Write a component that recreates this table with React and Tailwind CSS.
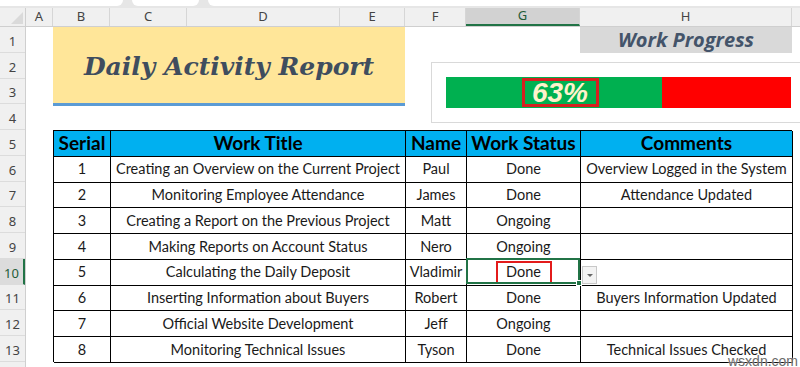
import React from "react";

const cols = [
  { l: "A", w: 27 },
  { l: "B", w: 57 },
  { l: "C", w: 77 },
  { l: "D", w: 153 },
  { l: "E", w: 65 },
  { l: "F", w: 61 },
  { l: "G", w: 114, sel: true },
  { l: "H", w: 212 },
];

const rows = [
  ["1", "Creating an Overview on the Current Project", "Paul", "Done", "Overview Logged in the System"],
  ["2", "Monitoring Employee Attendance", "James", "Done", "Attendance Updated"],
  ["3", "Creating a Report on the Previous Project", "Matt", "Ongoing", ""],
  ["4", "Making Reports on Account Status", "Nero", "Ongoing", ""],
  ["5", "Calculating the Daily Deposit", "Vladimir", "Done", ""],
  ["6", "Inserting Information about Buyers", "Robert", "Done", "Buyers Information Updated"],
  ["7", "Official Website Development", "Jeff", "Ongoing", ""],
  ["8", "Monitoring Technical Issues", "Tyson", "Done", "Technical Issues Checked"],
];

const uiFont = { fontFamily: '"Noto Sans", "Open Sans", sans-serif' };
const cellFont = { fontFamily: 'Lato, "Open Sans", sans-serif' };

export default function App() {
  return (
    <div className="w-[800px] h-[367px] overflow-hidden bg-white relative flex flex-col" style={uiFont}>
      {/* top strip */}
      <div className="h-[8px] bg-[#e6e6e6] flex items-start gap-[9px] shrink-0">
        <div className="w-[123px] h-[6px] bg-white rounded-br-[6px]" />
        <div className="w-[67px] h-[6px] bg-white rounded-b-[6px]" />
        <div className="flex-1 h-[6px] bg-white rounded-bl-[6px]" />
      </div>
      {/* column header */}
      <div className="h-[19px] flex shrink-0 bg-[#f0f0f0] border-b border-[#cfcfcf]">
        <div className="w-[26px] relative border-r border-[#cfcfcf]">
          <div className="absolute right-[2px] bottom-[2px] w-0 h-0 border-l-[12px] border-l-transparent border-b-[12px] border-b-[#dadada]" />
        </div>
        {cols.map((c) => (
          <div
            key={c.l}
            style={{ width: c.w }}
            className={
              "flex items-center justify-center text-[13px] border-r border-[#d6d6d6] " +
              (c.sel ? "bg-[#d2d2d2] border-b-2 border-b-[#217346] text-[#1f5c38]" : "text-[#444]")
            }
          >
            {c.l}
          </div>
        ))}
        <div className="flex-1" />
      </div>
      {/* body */}
      <div className="flex flex-1 min-h-0">
        <div className="w-[26px] shrink-0 bg-[#f0f0f0] border-r border-[#cfcfcf] flex flex-col">
          {Array.from({ length: 14 }, (_, i) => (
            <div
              key={i}
              className={
                "h-[25.75px] shrink-0 flex items-end pb-[2px] justify-center text-[13px] leading-[18px] border-b border-[#dcdcdc] " +
                (i === 9 ? "bg-[#dcdcdc] text-[#1f5c38] border-r-2 border-r-[#217346]" : "text-[#444]")
              }
            >
              {i < 13 ? i + 1 : ""}
            </div>
          ))}
        </div>
        <div className="relative flex-1">
          <div className="grid grid-cols-[27px_57px_77px_153px_65px_61px_114px_212px_1fr] grid-rows-[repeat(14,25.75px)]">
            {/* Title */}
            <div className="col-start-2 col-span-4 row-start-1 row-span-4 self-start h-[79px] bg-[#ffe699] border-b-[3px] border-[#5b9bd5] flex items-center justify-center pt-[3px]">
              <span
                className="text-[25px] font-bold italic text-[#3f4d5e]"
                style={{ fontFamily: '"DejaVu Serif", serif' }}
              >
                Daily Activity Report
              </span>
            </div>
            {/* Work Progress */}
            <div className="col-start-8 row-start-1 bg-[#d9d9d9] flex items-center justify-center">
              <span
                className="text-[20px] font-bold italic text-[#44546a]"
                style={{ fontFamily: '"Open Sans", sans-serif' }}
              >
                Work Progress
              </span>
            </div>
            {/* Table */}
            <div
              className="col-start-2 col-span-7 row-start-5 row-span-9 grid grid-cols-[57px_295px_61px_114px_212px] grid-rows-[repeat(9,25.75px)] border-l border-t border-black text-[#1a1a1a]"
              style={cellFont}
            >
              {["Serial", "Work Title", "Name", "Work Status", "Comments"].map((h) => (
                <div
                  key={h}
                  className="bg-[#00b0f0] border-r border-b border-black flex items-center justify-center text-[19px] font-bold text-black whitespace-nowrap overflow-hidden"
                >
                  {h}
                </div>
              ))}
              {rows.map((r, ri) =>
                r.map((v, ci) => (
                  <div
                    key={ri + "-" + ci}
                    className="border-r border-b border-black flex items-center justify-center text-[14.5px] whitespace-nowrap overflow-hidden"
                  >
                    {ri === 4 && ci === 3 ? (
                      <span className="border-2 border-[#e31b1b] w-[56px] h-[23px] flex items-center justify-center">
                        {v}
                      </span>
                    ) : (
                      v
                    )}
                  </div>
                ))
              )}
            </div>
          </div>

          {/* Selected cell G10 */}
          <div className="absolute left-[440px] top-[231px] w-[114px] h-[26px] border-2 border-[#217346]">
            <div className="absolute right-[-4px] bottom-[-4px] w-[6px] h-[6px] bg-[#217346] border border-white" />
          </div>
          {/* dropdown button */}
          <div className="absolute left-[556px] top-[239px] w-[15px] h-[18px] bg-[#f3f3f3] border border-[#c8c8c8] flex items-center justify-center">
            <div className="w-0 h-0 border-l-[3px] border-r-[3px] border-t-[3px] border-l-transparent border-r-transparent border-t-[#666]" />
          </div>

          {/* Chart object */}
          <div className="absolute left-[405px] top-[35px] w-[380px] h-[61px] bg-white border border-[#d9d9d9] flex items-center pl-[14px]">
            <div className="flex h-[31px] w-[345px]">
              <div className="w-[216px] bg-[#00b050] flex items-center justify-center pl-[12px]">
                <span className="border-[3px] border-[#d62020] w-[77px] h-[29px] flex items-center justify-center">
                  <span
                    className="text-[28px] font-bold italic text-[#fff2cc] leading-none"
                    style={{ fontFamily: '"Liberation Sans", Arial, sans-serif' }}
                  >
                    63%
                  </span>
                </span>
              </div>
              <div className="flex-1 bg-[#ff0000]" />
            </div>
          </div>

          {/* watermark */}
          <div
            className="absolute left-[702px] top-[327px] text-[14px] text-[#6b6b6b] leading-none"
            style={{ fontFamily: '"Liberation Sans", Arial, sans-serif', textShadow: "0 0 2px #fff" }}
          >
            wsxdn.com
          </div>
        </div>
      </div>
    </div>
  );
}
